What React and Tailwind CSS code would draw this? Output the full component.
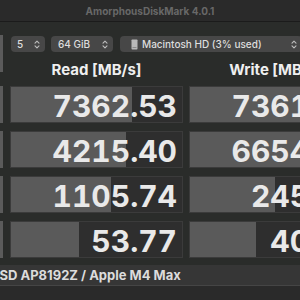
import React from 'react';

const rows = [
  { read: '7362.53', readFill: 121, write: '7361.86', writeFill: 121 },
  { read: '4215.40', readFill: 115, write: '6654.12', writeFill: 120 },
  { read: '1105.74', readFill: 100, write: '245.93', writeFill: 85 },
  { read: '53.77', readFill: 68, write: '40.21', writeFill: 66 },
];

const Chevrons = () => (
  <svg width="6" height="9" viewBox="0 0 6 9" className="shrink-0">
    <path d="M1 3.2 L3 1.2 L5 3.2" fill="none" stroke="#bdbdbd" strokeWidth="1.1" strokeLinecap="round" strokeLinejoin="round" />
    <path d="M1 5.8 L3 7.8 L5 5.8" fill="none" stroke="#bdbdbd" strokeWidth="1.1" strokeLinecap="round" strokeLinejoin="round" />
  </svg>
);

const DiskIcon = () => (
  <svg width="7" height="11" viewBox="0 0 7 11" className="shrink-0">
    <rect x="0.5" y="0.5" width="6" height="10" rx="0.8" fill="#b8b8b8" />
    <rect x="1.5" y="8" width="4" height="1" fill="#8a8a8a" />
  </svg>
);

const Popup = ({ children, className }) => (
  <div className={`h-[16px] rounded-[4px] bg-[#474747] flex items-center pr-[5px] text-[10px] font-medium leading-none text-[#dedede] ${className}`}>
    {children}
  </div>
);

const ResultBox = ({ value, fill }) => (
  <div className="relative w-[173px] h-[37px] shrink-0 bg-[#2e2e2e] border border-[#3b3b3b] flex items-center justify-end pr-[5px] overflow-hidden">
    <div className="absolute left-0 top-0 bottom-0 bg-[#5a5a5a]" style={{ width: fill }} />
    <span className="relative text-[30px] font-bold leading-none text-[#e9e9e9] tabular-nums pt-[2px]">{value}</span>
  </div>
);

export default function App() {
  return (
    <div className="w-[300px] h-[300px] overflow-hidden bg-[#2a2c2a] flex flex-col" style={{ fontFamily: 'Inter, "Liberation Sans", sans-serif' }}>
      <div className="h-[22px] shrink-0 bg-[#2a2a2a] border-b border-[#1b1b1b] flex items-center justify-center">
        <span className="text-[10px] font-bold text-[#686868] leading-none">AmorphousDiskMark 4.0.1</span>
      </div>

      <div className="flex pt-[13px]">
        <div className="w-[3px] h-[37px] bg-[#5b5b5b] shrink-0" />
        <div className="flex flex-col pl-[7px]">
          <div className="flex items-center mt-[1px] pl-[1px]">
            <Popup className="w-[34px] pl-[6px] justify-between">
              <span>5</span>
              <Chevrons />
            </Popup>
            <Popup className="w-[62px] ml-[6px] pl-[7px] justify-between">
              <span>64 GiB</span>
              <Chevrons />
            </Popup>
            <Popup className="w-[182px] ml-[7px] pl-[11px] shrink-0">
              <DiskIcon />
              <span className="ml-[4px] whitespace-nowrap">Macintosh HD (3% used)</span>
              <span className="ml-auto"><Chevrons /></span>
            </Popup>
          </div>
          <div className="flex mt-[10px]">
            <div className="w-[173px] shrink-0 text-center text-[15px] font-bold leading-none text-[#efefef]">Read [MB/s]</div>
            <div className="w-[173px] shrink-0 ml-[6px] text-center text-[15px] font-bold leading-none text-[#efefef] whitespace-nowrap">Write [MB/s]</div>
          </div>
        </div>
      </div>

      <div className="flex flex-col gap-[8px] mt-[9px]">
        {rows.map((r, i) => (
          <div key={i} className="flex">
            <div className="w-[3px] h-[37px] bg-[#5b5b5b] shrink-0" />
            <div className="ml-[7px] flex gap-[6px]">
              <ResultBox value={r.read} fill={r.readFill} />
              <ResultBox value={r.write} fill={r.writeFill} />
            </div>
          </div>
        ))}
      </div>

      <div className="mt-[7px] h-[21px] shrink-0 bg-[#363636] border-b border-[#454545] flex items-center overflow-hidden">
        <span className="-ml-[9px] text-[13px] font-bold text-[#dcdcdc] leading-none whitespace-nowrap">SSD AP8192Z / Apple M4 Max</span>
      </div>
      <div className="flex-1 bg-[#2a2a2a]" />
    </div>
  );
}
